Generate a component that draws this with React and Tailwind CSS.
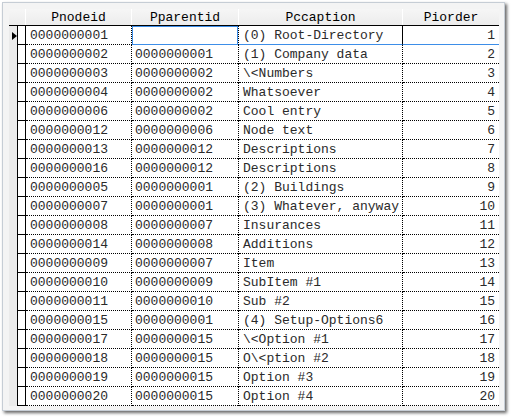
import React from 'react';

const rows = [
  ['0000000001', '', '(0) Root-Directory', 1],
  ['0000000002', '0000000001', '(1) Company data', 2],
  ['0000000003', '0000000002', '\\<Numbers', 3],
  ['0000000004', '0000000002', 'Whatsoever', 4],
  ['0000000006', '0000000002', 'Cool entry', 5],
  ['0000000012', '0000000006', 'Node text', 6],
  ['0000000013', '0000000012', 'Descriptions', 7],
  ['0000000016', '0000000012', 'Descriptions', 8],
  ['0000000005', '0000000001', '(2) Buildings', 9],
  ['0000000007', '0000000001', '(3) Whatever, anyway', 10],
  ['0000000008', '0000000007', 'Insurances', 11],
  ['0000000014', '0000000008', 'Additions', 12],
  ['0000000009', '0000000007', 'Item', 13],
  ['0000000010', '0000000009', 'SubItem #1', 14],
  ['0000000011', '0000000010', 'Sub #2', 15],
  ['0000000015', '0000000001', '(4) Setup-Options6', 16],
  ['0000000017', '0000000015', '\\<Option #1', 17],
  ['0000000018', '0000000015', 'O\\<ption #2', 18],
  ['0000000019', '0000000015', 'Option #3', 19],
  ['0000000020', '0000000015', 'Option #4', 20],
];

const headers = [
  { label: 'Pnodeid', w: 'w-[106px]' },
  { label: 'Pparentid', w: 'w-[107px]' },
  { label: 'Pccaption', w: 'w-[164px]' },
  { label: 'Piorder', w: 'w-[96px]' },
];

const Row = ({ r, first }) => {
  const [id, parent, caption, order] = r;
  const under = first ? 'border-b border-solid border-b-[#3d8ee8]' : 'border-b border-dotted border-b-black';
  return (
    <div className="flex h-[19px]">
      {/* indicator */}
      <div className="flex w-[17px]">
        <div className="flex w-[8px] items-center bg-[#ebebeb]">
          {first && (
            <svg width="5" height="8" viewBox="0 0 5 8" className="ml-[3px] mt-[1px]">
              <path d="M0 0 L5 4 L0 8 Z" fill="#000" />
            </svg>
          )}
        </div>
        <div className="w-[9px] border-x border-b border-black bg-white" />
      </div>
      <div className="h-[19px] w-[106px] overflow-hidden border-r border-b border-dotted border-black bg-white pl-1 leading-[20px] whitespace-nowrap">
        {id}
      </div>
      <div className="w-[107px] border-r border-dotted border-r-black bg-white">
        <div
          className={
            first
              ? 'h-[19px] border border-[#3d8ee8] pl-[2px] leading-[19px] whitespace-nowrap'
              : 'h-[19px] overflow-hidden border-b border-dotted border-b-black pl-[3px] leading-[20px] whitespace-nowrap'
          }
        >
          {parent}
        </div>
      </div>
      <div className={`h-[19px] w-[164px] overflow-hidden border-r border-dotted border-r-black bg-white pl-1 leading-[20px] whitespace-nowrap ${under}`}>
        {caption}
      </div>
      <div className={`h-[19px] w-[96px] overflow-hidden bg-white pr-1 text-right leading-[20px] ${under}`}>{order}</div>
    </div>
  );
};

export default function App() {
  return (
    <div className="w-[511px] h-[418px] bg-white pt-[2px] pl-[2px] font-['Liberation_Mono','Courier_New',monospace] text-[13px] text-[#2a2a2a]">
      <div className="w-[503px] h-[409px] border border-[#c6cdd5] bg-[#f4f4f4] pt-[6px] pl-[6px] shadow-[2px_2px_3px_rgba(0,0,0,0.6)]">
        <div className="w-[490px]">
          {/* header */}
          <div className="flex h-[17px] border-b border-black bg-gradient-to-b from-[#f6f6f6] to-[#ececec] text-black">
            <div className="w-[17px] border-r border-white" />
            {headers.map((h, i) => (
              <div
                key={h.label}
                className={`${h.w} ${i < 3 ? 'border-r border-white' : ''} text-center leading-[17px]`}
              >
                {h.label}
              </div>
            ))}
          </div>
          {rows.map((r, i) => (
            <Row key={r[0]} r={r} first={i === 0} />
          ))}
        </div>
      </div>
    </div>
  );
}
